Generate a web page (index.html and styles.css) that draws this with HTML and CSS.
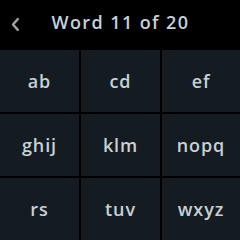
FILE: index.html
```html
<!DOCTYPE html>
<html>
<head>
<meta charset="utf-8">
<link rel="stylesheet" href="styles.css">
</head>
<body>
<div class="screen">
  <header class="header">
    <span class="back">
      <svg width="10" height="15" viewBox="0 0 10 15"><path d="M7.8 2.2 L3 7.5 L7.8 12.8" fill="none" stroke="#9aa0a5" stroke-width="2.5" stroke-linecap="round" stroke-linejoin="round"/></svg>
    </span>
    <h1 class="title">Word 11 of 20</h1>
  </header>
  <main class="grid">
    <div class="cell">ab</div>
    <div class="cell">cd</div>
    <div class="cell">ef</div>
    <div class="cell">ghij</div>
    <div class="cell">klm</div>
    <div class="cell">nopq</div>
    <div class="cell">rs</div>
    <div class="cell">tuv</div>
    <div class="cell">wxyz</div>
  </main>
</div>
</body>
</html>
```
FILE: styles.css
```css
html, body {
  margin: 0;
  padding: 0;
  background: #000;
}
.screen {
  width: 240px;
  height: 240px;
  display: flex;
  flex-direction: column;
  background: #000;
  font-family: "Open Sans", Inter, sans-serif;
  overflow: hidden;
}
.header {
  height: 50px;
  box-sizing: border-box;
  padding-bottom: 6px;
  display: flex;
  align-items: center;
  position: relative;
}
.back {
  position: absolute;
  left: 10px;
  top: 17px;
  width: 10px;
  height: 15px;
  display: flex;
}
.title {
  margin: 0;
  width: 100%;
  text-align: center;
  font-size: 18px;
  font-weight: 600;
  color: #c8d0d6;
  letter-spacing: 1.4px;
  line-height: 18px;
  padding-left: 1px;
}
.grid {
  flex: 1;
  display: grid;
  grid-template-columns: 79px 79px 78px;
  grid-template-rows: 62px 62px 62px;
  column-gap: 2px;
  row-gap: 2px;
}
.cell {
  background: #141c21;
  display: flex;
  align-items: center;
  justify-content: center;
  color: #c8d0d6;
  font-size: 18px;
  font-weight: 600;
  letter-spacing: 0.9px;
}
```
